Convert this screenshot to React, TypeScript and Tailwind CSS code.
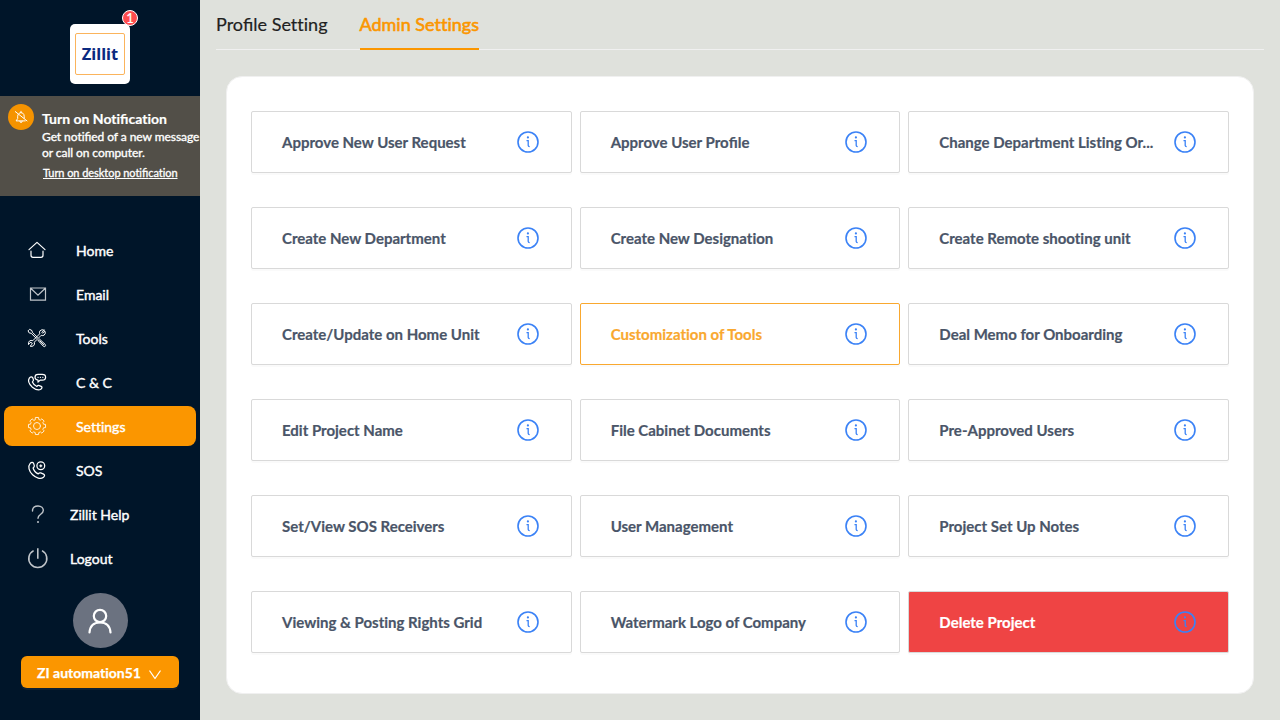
import type { ReactNode } from "react";

function Icon({ size = 20, sw = 1, vb = 20, className = "", children }: { size?: number; sw?: number; vb?: number; className?: string; children: ReactNode }) {
  return (
    <svg width={size} height={size} viewBox={`0 0 ${vb} ${vb}`} fill="none" stroke="currentColor" strokeWidth={sw} strokeLinecap="round" strokeLinejoin="round" className={`overflow-visible ${className}`}>
      {children}
    </svg>
  );
}

/* Ligatures are off for the page; only the "fi" pair is joined. */
function Text({ children }: { children: string }) {
  return (
    <>
      {children.split(/(fi)/).map((part, i) =>
        part === "fi" ? <span key={i} className="[font-feature-settings:'liga'_1]">fi</span> : part,
      )}
    </>
  );
}

const HANDSET = "M2.3 6.2C3.4 4.6 4.9 4.3 5.6 5.6L6.4 7.5C6.8 8.8 6.4 9.1 5.4 9.9 6.3 12 7.9 13.6 9.9 14.5 10.6 13.4 11.1 13.2 12.3 13.6L14.2 14.4C15.4 15.1 15.2 16.2 13.8 17.3 11.4 18.7 8.3 17.5 5.4 15.2 2 12.2.6 8.9 2.3 6.2Z";

const SOS_HANDSET = "M3.2 3.4C4.4 2 6 2 6.6 3.4L7.3 5.6C7.6 6.8 7 7.3 6.1 8 6.8 10.6 8.7 12.8 11.2 13.9 12 12.9 12.6 12.5 13.7 12.9L16.6 14.1C18 14.9 17.8 16.1 16.5 17.2 13.6 19.4 9 18 5.6 14.8 1.9 11.3.6 6.4 3.2 3.4Z";

const GEAR = (() => {
  const pts: string[] = [];
  for (let i = 0; i < 8; i++) {
    const c = (i * Math.PI) / 4 - Math.PI / 2;
    const p = (r: number, a: number) => `${(10 + r * Math.cos(c + a)).toFixed(2)} ${(10 + r * Math.sin(c + a)).toFixed(2)}`;
    pts.push(`${i ? "L" : "M"}${p(6.8, -0.26)}L${p(8.7, -0.19)}L${p(8.7, 0.19)}L${p(6.8, 0.26)}`);
  }
  return pts.join("") + "Z";
})();

const HomeIcon = () => (
  <Icon sw={1.2}><path d="M2 9.6 10 2.4 18 9.6" /><path d="M4 11.2V15.3Q4 17.3 6 17.3H14Q16 17.3 16 15.3V11.2" /></Icon>
);
const EmailIcon = () => (
  <Icon className="opacity-75" sw={1.2}><path d="M3.5 4H18.5V16.2H3.5ZM3.7 4.2 11 11.2 18.3 4.2" strokeLinejoin="miter" /></Icon>
);
const ToolsIcon = () => (
  <Icon sw={1}>
    <path d="M1.3 2.6 2.6 1.3 5 2.6 5.3 4.2 10.4 9.3 9.3 10.4 4.2 5.3 2.6 5ZM11.3 12.3 12.5 11.1 18.2 16.4Q19 17.6 18.2 18.3 17.4 19 16.3 18.2L11.2 12.6M12.7 12.7 16.8 16.9" />
    <path d="M17.1 2.1 14.9 4.3 15.6 5.2 17.9 3.1Q19.1 5.5 17.2 7.1 15.8 8 14.2 7.3L7.3 14.2Q8 16.2 6.7 17.6 5.1 18.8 3.1 18.2L5.3 16 4.6 14.6 3.1 14.5 1.5 16.6Q.9 14.2 2.6 12.9 4 12 5.8 12.7L12.7 5.8Q12 4.1 13.1 2.7 14.7 1 17.1 2.1Z" />
  </Icon>
);
const CallIcon = () => (
  <Icon sw={1.25}>
    <path d={HANDSET} />
    <path d="M11 2.4H15.2Q18.6 2.4 18.6 5.2 18.6 8.1 15.2 8.1H13.2L11 10V8Q8 7.6 8 5.2 8 2.4 11 2.4Z" />
    <path d="M11 5.3h.1M13.4 5.3h.1M15.8 5.3h.1" />
  </Icon>
);
const GearIcon = () => (
  <Icon sw={1} className="opacity-85"><path d={GEAR} /><circle cx="10" cy="10" r="3.5" /></Icon>
);
const SosIcon = () => (
  <Icon sw={1.25}>
    <path d={SOS_HANDSET} />
    <circle cx="13.8" cy="5.8" r="3.9" /><path d="M12.8 5.8H14.8M13.8 4.8V6.8" />
  </Icon>
);
const HelpIcon = () => (
  <Icon className="opacity-75" sw={1.4}><path d="M5.5 7C5.5 3.8 7.8 2 11 2 14.2 2 16.3 4 16.3 6.6 16.3 10.4 11 10.2 11 14.2" /><circle cx="11" cy="18" r="1" fill="currentColor" stroke="none" /></Icon>
);
const PowerIcon = () => (
  <Icon className="opacity-75" sw={1.6}><path d="M10.8 .2V10.8M6.6 2.6A9 9 0 1 0 15 2.6" strokeLinecap="butt" /></Icon>
);

function InfoIcon() {
  return (
    <svg width="24" height="24" viewBox="0 0 24 24" fill="none" stroke="currentColor" className="shrink-0 text-[#3b82f6]">
      <circle cx="12" cy="12" r="10" strokeWidth="1.6" />
      <circle cx="11.9" cy="7.4" r="1.1" fill="currentColor" stroke="none" />
      <path d="M10.5 10.6H12.2V15.6Q12.2 16.7 13.7 16.7" strokeWidth="1.3" />
    </svg>
  );
}

const NAV: { label: string; icon: ReactNode; active?: boolean; tight?: boolean }[] = [
  { label: "Home", icon: <HomeIcon /> },
  { label: "Email", icon: <EmailIcon /> },
  { label: "Tools", icon: <ToolsIcon /> },
  { label: "C & C", icon: <CallIcon /> },
  { label: "Settings", icon: <GearIcon />, active: true },
  { label: "SOS", icon: <SosIcon /> },
  { label: "Zillit Help", icon: <HelpIcon />, tight: true },
  { label: "Logout", icon: <PowerIcon />, tight: true },
];

const CARDS = [
  "Approve New User Request", "Approve User Profile", "Change Department Listing Or...",
  "Create New Department", "Create New Designation", "Create Remote shooting unit",
  "Create/Update on Home Unit", "Customization of Tools", "Deal Memo for Onboarding",
  "Edit Project Name", "File Cabinet Documents", "Pre-Approved Users",
  "Set/View SOS Receivers", "User Management", "Project Set Up Notes",
  "Viewing & Posting Rights Grid", "Watermark Logo of Company", "Delete Project",
];

function cardStyle(label: string) {
  if (label === "Customization of Tools") return "border-[#f9a82f] bg-white text-[#f9a82f]";
  if (label === "Delete Project") return "border-[#d9d9d9] bg-[#ef4444] text-white";
  return "border-[#d9d9d9] bg-white text-[#4a5568]";
}

function Sidebar() {
  return (
    <aside className="flex h-full w-[200px] shrink-0 flex-col items-center bg-[#001529] text-white">
      <div className="relative mt-6 flex size-[60px] shrink-0 items-center justify-center rounded-[5px] bg-white">
        <div className="flex h-[42px] w-[50px] items-center justify-center rounded-[2px] border border-[#fbb45c] font-['Noto_Sans',sans-serif] text-[16.5px] font-bold text-[#0b2a80]">Zillit</div>
        <span className="absolute -top-[14px] left-[52px] flex size-4 items-center justify-center rounded-full border border-white bg-[#ff4d4f] pt-px text-[13px] leading-none [-webkit-text-stroke:0.2px]">1</span>
      </div>
      <div className="mt-3 flex h-[100px] w-full shrink-0 bg-[#524f48] pl-2 pt-2">
        <div className="flex size-[26px] shrink-0 items-center justify-center rounded-full bg-[#f59300]">
          <Icon size={14} sw={1} vb={14}>
            <path d="M1.3 1.6 13 10.9M4.3 4.2Q3.7 5 3.7 6.2V8.5L2.1 10.9H11.2M5.1 3.2Q7 2 8.8 3.2 10.2 4.2 10.2 6.3V8.2M7 2.6V1.3M5.9 11.1Q6 12.6 7 12.6 8.1 12.6 8.2 11.1" />
          </Icon>
        </div>
        <div className="ml-2 whitespace-nowrap pt-[5px]">
          <div className="text-sm font-bold leading-5 [-webkit-text-stroke:0.2px]"><Text>Turn on Notification</Text></div>
          <div className="text-xs leading-4 tracking-[-0.06px] [-webkit-text-stroke:0.35px]"><Text>Get notified of a new message</Text><br />or call on computer.</div>
          <div className="ml-px mt-1 text-[11px] leading-4 tracking-[-0.05px] underline [-webkit-text-stroke:0.3px]"><Text>Turn on desktop notification</Text></div>
        </div>
      </div>
      <nav className="mt-[34px] flex w-full flex-col gap-1 px-1">
        {NAV.map((n) => (
          <div key={n.label} className={`flex h-10 items-center rounded-lg pl-[23px] ${n.active ? "bg-[#fb9600]" : ""}`}>
            <span className="flex w-5 shrink-0">{n.icon}</span>
            <span className={`pt-0.5 text-sm [-webkit-text-stroke:0.4px] ${n.tight ? "ml-[23px]" : "ml-[29px]"}`}>{n.label}</span>
          </div>
        ))}
      </nav>
      <div className="mt-[15px] flex size-[55px] shrink-0 items-center justify-center rounded-full bg-[#6b7280]">
        <Icon size={28} vb={28} sw={2.2}><circle cx="14" cy="9" r="6.2" /><path d="M3.5 25.5C4 19 8 15.5 14 15.5S24 19 24.5 25.5" /></Icon>
      </div>
      <button className="mt-2 flex h-8 w-[158px] shrink-0 items-center rounded-md bg-[#fb9600] pl-4 text-sm font-bold shadow-[0_2px_0_rgba(255,255,255,0.05)] [-webkit-text-stroke:0.25px]">
        <span className="pt-px">ZI automation51</span>
        <Icon size={12} vb={12} sw={1.3} className="ml-2 mt-1.5"><path d="M.8 2 6 9.5 11.2 2" /></Icon>
      </button>
    </aside>
  );
}

export default function App() {
  return (
    <div className="flex h-[720px] w-[1280px] overflow-hidden bg-[#dfe1dc] font-['Lato',sans-serif] [font-feature-settings:'liga'_0]">
      <Sidebar />
      <main className="flex min-w-0 flex-1 flex-col px-4">
        <div className="flex h-[50px] shrink-0 gap-8 border-b border-[#f0f0f0] text-lg">
          <div className="pt-[10px] text-[#1f1f1f] [-webkit-text-stroke:0.2px]"><Text>Profile Setting</Text></div>
          <div className="-mb-px border-b-2 border-[#fb9600] pt-[10px] text-[#fb9600] [-webkit-text-stroke:0.6px]">Admin Settings</div>
        </div>
        <section className="mx-[10px] mt-[26px] h-[618px] shrink-0 rounded-2xl border border-[#f0f0f0] bg-white px-6 pt-[34px]">
          <div className="grid grid-cols-3 gap-x-2 gap-y-[34px]">
            {CARDS.map((label) => (
              <div key={label} className={`flex h-[62px] items-center justify-between rounded-xs border pl-[30px] pr-[31px] shadow-[0_2px_0_rgba(0,0,0,0.02)] ${cardStyle(label)}`}>
                <span className="whitespace-nowrap pt-px text-[15px] font-bold [-webkit-text-stroke:0.2px]"><Text>{label}</Text></span>
                <InfoIcon />
              </div>
            ))}
          </div>
        </section>
      </main>
    </div>
  );
}
